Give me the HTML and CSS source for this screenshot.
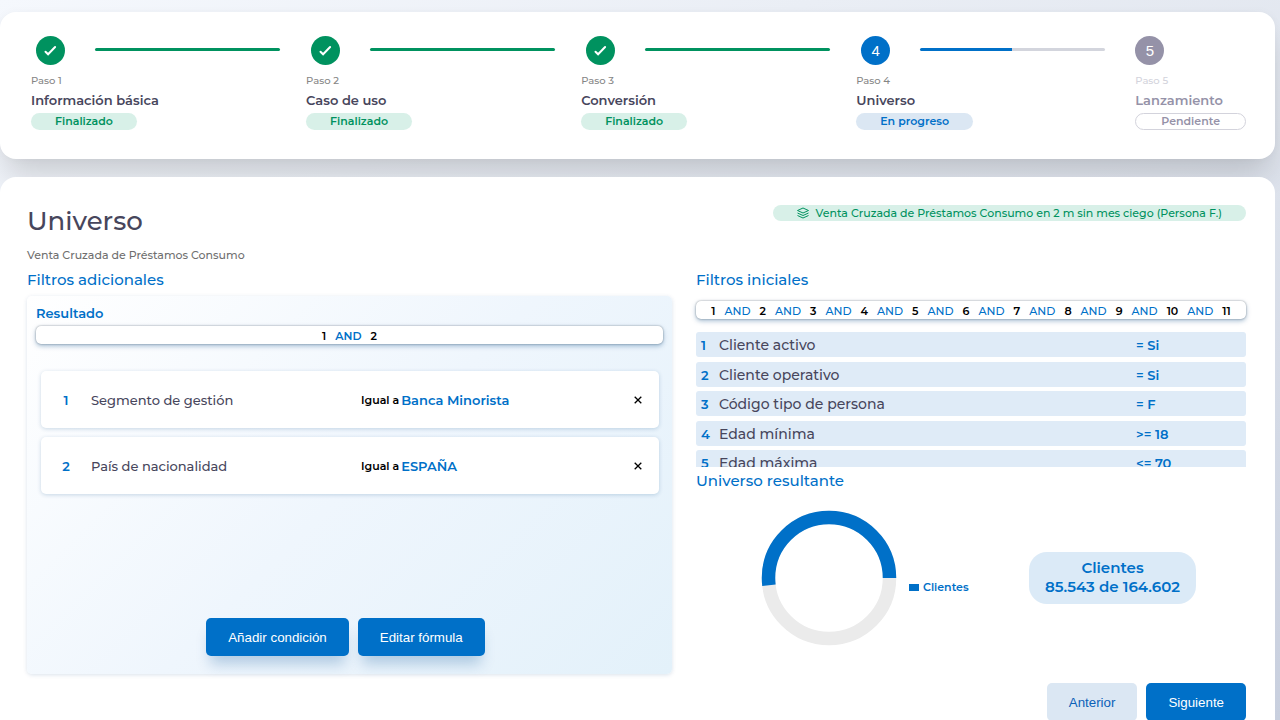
FILE: index.html
```html
<!DOCTYPE html>
<html lang="es">
<head>
<meta charset="utf-8">
<title>Universo</title>
<link rel="stylesheet" href="styles.css">
</head>
<body>
<div class="page">
  <nav class="card steps" aria-label="Pasos">
    <div class="step">
      <div class="track">
        <span class="dot done"><svg viewBox="0 0 29 29"><path d="M9.500 15.700l2.600 2.600 7-7.300"/></svg></span>
        <span class="line done"></span>
      </div>
      <span class="num">Paso 1</span>
      <span class="name">Información básica</span>
      <span class="badge done">Finalizado</span>
    </div>
    <div class="step">
      <div class="track">
        <span class="dot done"><svg viewBox="0 0 29 29"><path d="M9.500 15.700l2.600 2.600 7-7.300"/></svg></span>
        <span class="line done"></span>
      </div>
      <span class="num">Paso 2</span>
      <span class="name">Caso de uso</span>
      <span class="badge done">Finalizado</span>
    </div>
    <div class="step">
      <div class="track">
        <span class="dot done"><svg viewBox="0 0 29 29"><path d="M9.500 15.700l2.600 2.600 7-7.300"/></svg></span>
        <span class="line done"></span>
      </div>
      <span class="num">Paso 3</span>
      <span class="name">Conversión</span>
      <span class="badge done">Finalizado</span>
    </div>
    <div class="step">
      <div class="track">
        <span class="dot current">4</span>
        <span class="line half"></span>
      </div>
      <span class="num">Paso 4</span>
      <span class="name">Universo</span>
      <span class="badge current">En progreso</span>
    </div>
    <div class="step pending">
      <div class="track"><span class="dot">5</span></div>
      <span class="num">Paso 5</span>
      <span class="name">Lanzamiento</span>
      <span class="badge">Pendiente</span>
    </div>
  </nav>

  <main class="card content">
    <header class="head">
      <h1>Universo</h1>
      <span class="tag">
        <svg viewBox="0 0 12 12"><path d="M6 1L11.500 3.500 6 6 .5 3.500zM.5 6L6 8.500 11.500 6M.5 8.500L6 11l5.500-2.500"/></svg>
        Venta Cruzada de Préstamos Consumo en 2 m sin mes ciego (Persona F.)
      </span>
    </header>
    <p class="subtitle">Venta Cruzada de Préstamos Consumo</p>

    <div class="columns">
      <section class="left">
        <h2>Filtros adicionales</h2>
        <div class="panel">
          <h3>Resultado</h3>
          <div class="formula"><span>1</span><b>AND</b><span>2</span></div>
          <ul class="conditions">
            <li>
              <span class="index">1</span>
              <span class="field">Segmento de gestión</span>
              <span class="rule"><small>Igual a</small> <b>Banca Minorista</b></span>
              <button class="close" type="button" aria-label="Quitar condición 1"><svg viewBox="0 0 8 8"><path d="M.7.7l6.600 6.600M7.300.7L.7 7.300"/></svg></button>
            </li>
            <li>
              <span class="index">2</span>
              <span class="field">País de nacionalidad</span>
              <span class="rule"><small>Igual a</small> <b>ESPAÑA</b></span>
              <button class="close" type="button" aria-label="Quitar condición 2"><svg viewBox="0 0 8 8"><path d="M.7.7l6.600 6.600M7.300.7L.7 7.300"/></svg></button>
            </li>
          </ul>
          <div class="actions">
            <button class="btn raised" type="button">Añadir condición</button>
            <button class="btn raised" type="button">Editar fórmula</button>
          </div>
        </div>
      </section>

      <section class="right">
        <h2>Filtros iniciales</h2>
        <div class="formula wide"><span>1</span><b>AND</b><span>2</span><b>AND</b><span>3</span><b>AND</b><span>4</span><b>AND</b><span>5</span><b>AND</b><span>6</span><b>AND</b><span>7</span><b>AND</b><span>8</span><b>AND</b><span>9</span><b>AND</b><span>10</span><b>AND</b><span>11</span></div>
        <ul class="filters">
          <li><b>1</b><span>Cliente activo</span><b>= Si</b></li>
          <li><b>2</b><span>Cliente operativo</span><b>= Si</b></li>
          <li><b>3</b><span>Código tipo de persona</span><b>= F</b></li>
          <li><b>4</b><span>Edad mínima</span><b>&gt;= 18</b></li>
          <li><b>5</b><span>Edad máxima</span><b>&lt;= 70</b></li>
        </ul>
        <h2>Universo resultante</h2>
        <div class="result">
          <figure class="chart">
            <svg class="donut" viewBox="0 0 136 136" role="img" aria-label="Clientes">
              <circle class="rest" cx="68" cy="68" r="60.500" pathLength="360"/>
              <circle class="value" cx="68" cy="68" r="60.500" pathLength="360"/>
            </svg>
            <figcaption>Clientes</figcaption>
          </figure>
          <p class="total">Clientes<br>85.543 de 164.602</p>
        </div>
        <div class="nav">
          <button class="btn light" type="button">Anterior</button>
          <button class="btn" type="button">Siguiente</button>
        </div>
      </section>
    </div>
  </main>
</div>
</body>
</html>
```
FILE: styles.css
```css
* { box-sizing: border-box; }

body {
  margin: 0;
  color: #47465c;
  font-family: Montserrat, Inter, sans-serif;
  font-size: 13px;
  font-weight: 500;
}

h1, h2, h3, p, ul, figure { margin: 0; padding: 0; }
ul { list-style: none; }
b { font-weight: 600; }

.page {
  height: 100vh;
  overflow: hidden;
  padding: 12px 5px 0 0;
  background: linear-gradient(160deg, #f5f8fd, #dfe4ed 50%, #c8cfde);
}

.card { border-radius: 16px; background: #fff; }

/* Stepper */
.steps {
  display: grid;
  grid-template-columns: repeat(4, 1fr) auto;
  padding: 24px 29px 29px 31px;
  box-shadow: 0 20px 30px -6px rgba(0, 0, 0, .16), 0 0 10px rgba(0, 0, 0, .03);
}
.step {
  display: flex;
  flex-direction: column;
  align-items: flex-start;
}
.track {
  display: flex;
  align-self: stretch;
  gap: 30px;
  padding: 0 26px 0 5px;
}
.dot {
  display: flex;
  align-items: center;
  justify-content: center;
  width: 29px;
  height: 29px;
  border-radius: 50%;
  background: #9592a8;
  color: #fff;
  font: 15px "Liberation Sans", Arial, sans-serif;
}
.dot.done, .line.done { background: #00925f; }
.dot.current { background: #0070c8; }
.dot svg { width: 29px; fill: none; stroke: #fff; stroke-width: 2; stroke-linecap: round; }
.line { flex: 1; height: 3px; margin-top: 12px; border-radius: 2px; }
.line.half { background: linear-gradient(90deg, #0070c8 50%, #d3d5dd 50%); }
.num { margin-top: 8px; color: #858585; font-size: 10px; line-height: 16px; }
.name { margin-top: 2px; font-size: 13px; font-weight: 600; line-height: 18px; }
.badge {
  margin-top: 4px;
  padding: 0 24px;
  border-radius: 9px;
  font-size: 11px;
  font-weight: 600;
  line-height: 17px;
}
.badge.done, .tag { background: #d8f0e8; color: #00925f; }
.badge.current { background: #dbe7f3; color: #0070c8; }
.pending { margin-left: 4px; color: #9592a8; }
.pending .track { padding: 0; }
.pending .num { color: #d3d3dc; }
.pending .badge { padding: 0 25px; border: 1px solid #d3d3dc; line-height: 15px; }

/* Main card */
.content {
  min-height: 560px;
  margin-top: 18px;
  padding: 28px 29px 16px 27px;
  position: relative;
}
.head { display: flex; align-items: flex-start; justify-content: space-between; }
h1 { font-size: 26px; font-weight: 500; line-height: 32px; }
.tag {
  display: flex;
  align-items: center;
  gap: 7px;
  padding: 0 24px;
  border-radius: 8px;
  font-size: 11px;
  line-height: 16px;
}
.tag svg { width: 12px; fill: none; stroke: currentColor; stroke-linejoin: round; }
.subtitle { margin-top: 10px; color: #6f6f6f; font-size: 11px; line-height: 16px; }

.columns {
  display: grid;
  grid-template-columns: 645fr 550fr;
  gap: 24px;
  margin-top: 7px;
}
h2 { color: #0070c8; font-size: 15px; font-weight: 500; line-height: 20px; }
h3 { color: #0070c8; font-size: 13px; font-weight: 600; line-height: 18px; }

.panel {
  display: flex;
  flex-direction: column;
  height: 378px;
  margin-top: 6px;
  padding: 8px 9px 18px;
  border-radius: 5px;
  background: linear-gradient(135deg, #fff, #eff6fd 50%, #e3f1fa);
  box-shadow: 0 1px 4px rgba(0, 60, 120, .15);
}
.formula {
  display: flex;
  justify-content: center;
  gap: 9px;
  padding-top: 2px;
  border-radius: 5px;
  background: #fff;
  box-shadow: 0 2px 5px rgba(0, 70, 130, .35), 0 0 2px rgba(0, 0, 0, .4);
  color: #000;
  font-size: 11px;
  font-weight: 600;
  line-height: 16px;
}
.panel .formula { margin-top: 4px; }
.formula b, .rule b, .index, .filters b { color: #0070c8; }

.conditions { display: grid; gap: 9px; margin-top: 27px; padding: 0 4px 0 5px; }
.conditions li {
  display: grid;
  grid-template-columns: 50px 270px 1fr auto;
  align-items: center;
  height: 57px;
  padding: 0 15px 0 0;
  border-radius: 5px;
  background: #fff;
  box-shadow: 0 1px 4px rgba(0, 70, 130, .2);
}
.index { text-align: center; font-weight: 600; }
.rule { display: flex; align-items: center; gap: 2px; }
.rule small { color: #000; font-size: 11px; font-weight: 600; }
.close { display: flex; width: 12px; height: 12px; padding: 2px; border: 0; background: none; }
.close svg { width: 8px; fill: none; stroke: #000; stroke-width: 1.300; }

.actions { display: flex; justify-content: center; gap: 9px; margin-top: auto; padding-right: 8px; }
.btn {
  height: 38px;
  padding: 0 22px;
  border: 0;
  border-radius: 5px;
  background: #0070c8;
  color: #fff;
  font-family: "Liberation Sans", Arial, sans-serif;
}
.btn.light { background: #dbe7f3; color: #0b62b8; }
.btn.raised { box-shadow: 0 12px 14px -4px rgba(0, 80, 150, .25); }

.formula.wide { margin: 11px 0 13px; }
.wide b { font-weight: 500; }
.filters { height: 135px; overflow-y: auto; scrollbar-width: none; }
.filters li {
  display: grid;
  grid-template-columns: 18px 1fr 104px;
  align-items: center;
  height: 25px;
  margin-bottom: 4px;
  padding: 0 6px 0 5px;
  border-radius: 3px;
  background: #dfebf7;
}
.filters li:nth-child(odd) { margin-bottom: 5px; }
.filters span { font-size: 14px; }
.filters + h2 { margin-top: 4px; }

.result {
  display: grid;
  grid-template-columns: 1fr auto;
  align-items: center;
  padding: 19px 50px 0 65px;
}
.chart { display: flex; align-items: center; gap: 12px; }
.donut { width: 136px; }
.donut circle { fill: none; stroke-width: 13.500; }
.rest { stroke: #ebebeb; }
.value { stroke: #0070c8; stroke-dasharray: 187 173; stroke-dashoffset: 187; }
figcaption {
  display: flex;
  align-items: center;
  gap: 4px;
  margin-top: 18px;
  color: #0070c8;
  font-size: 11px;
  font-weight: 600;
}
figcaption::before { content: ""; width: 10px; height: 7px; background: #0070c8; }
.total {
  padding: 6px 16px 8px;
  border-radius: 18px;
  background: #dbeaf7;
  color: #0070c8;
  font-size: 15px;
  font-weight: 600;
  line-height: 19px;
  text-align: center;
}
.nav { display: flex; justify-content: flex-end; gap: 9px; margin-top: 37px; }
```
